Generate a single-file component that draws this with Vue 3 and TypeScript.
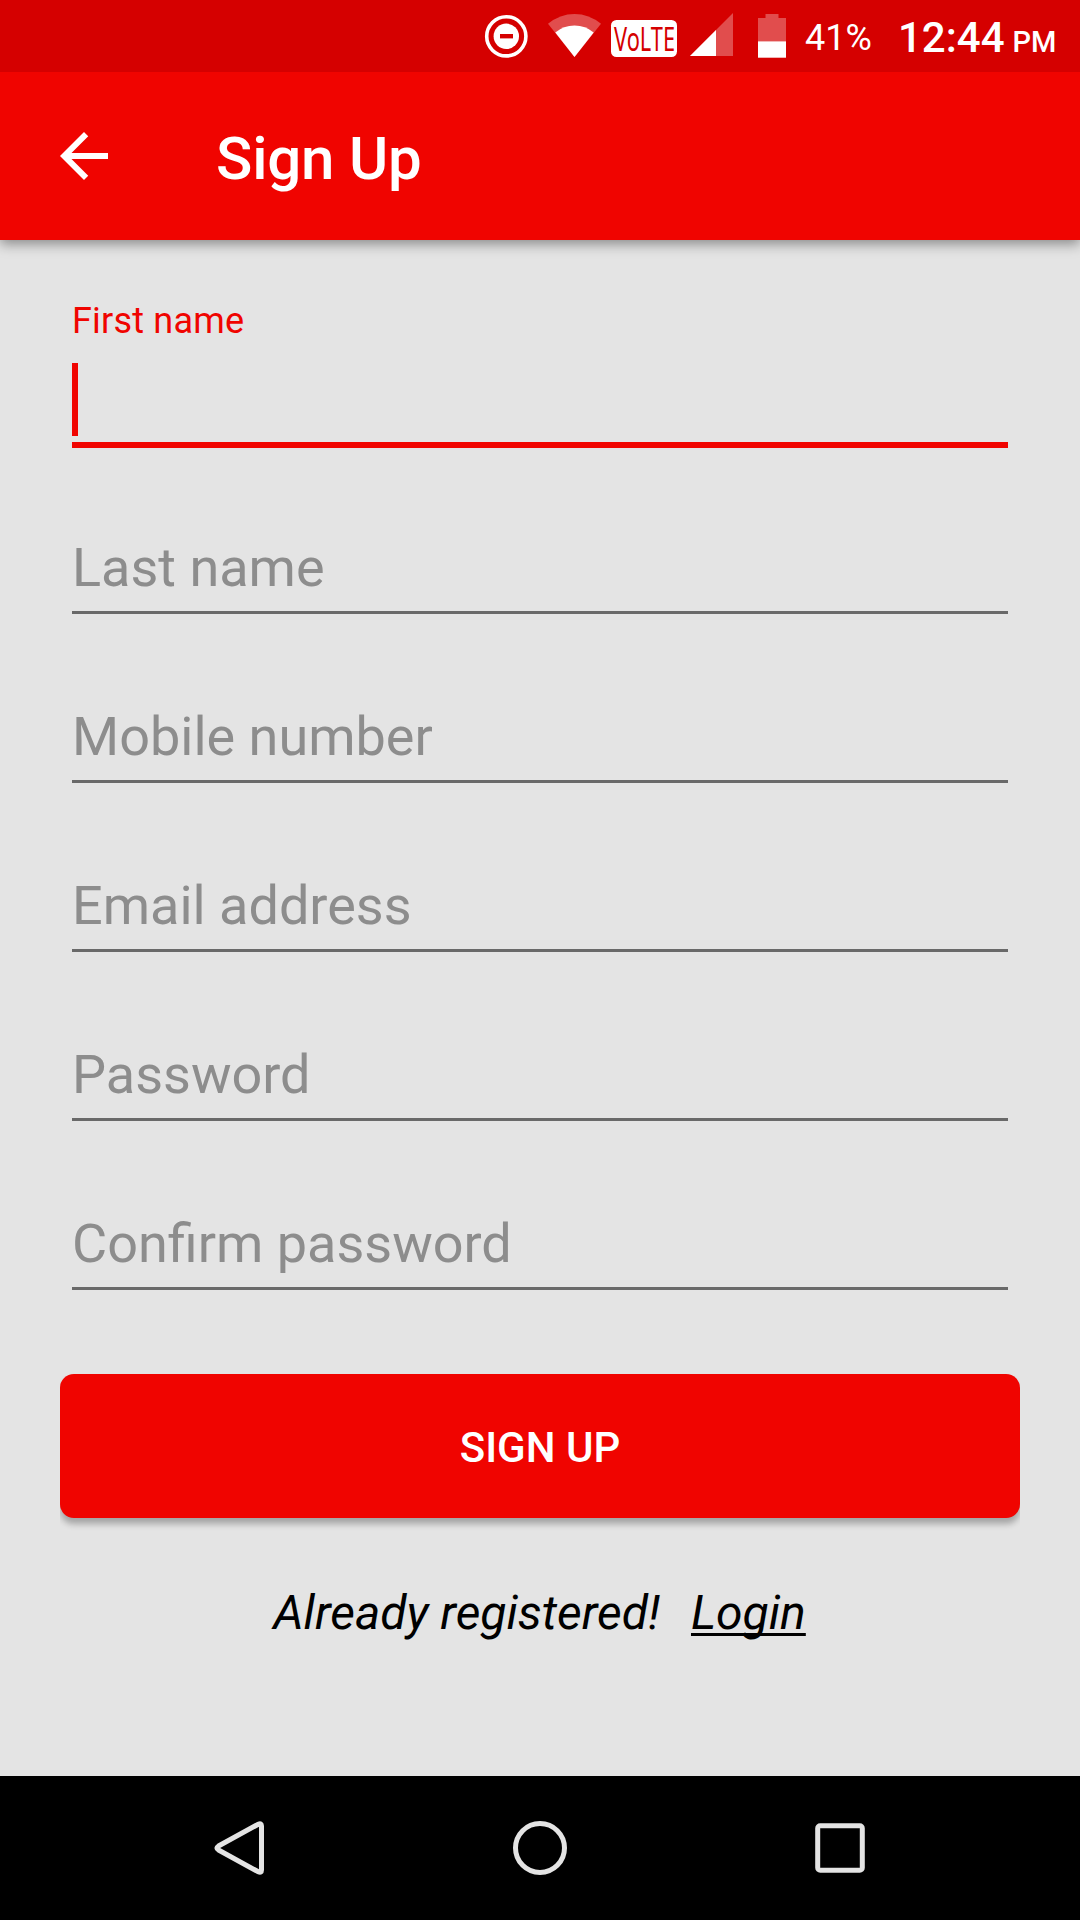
<script setup lang="ts">
interface Field {
  id: string
  label: string
}

const fields: Field[] = [
  { id: 'last-name', label: 'Last name' },
  { id: 'mobile', label: 'Mobile number' },
  { id: 'email', label: 'Email address' },
  { id: 'password', label: 'Password' },
  { id: 'confirm', label: 'Confirm password' },
]
</script>

<template>
  <div class="screen">
    <header class="status">
      <svg class="dnd" width="44" height="72" viewBox="0 0 44 72">
        <circle cx="22.3" cy="36.3" r="19.6" fill="none" stroke="#fff" stroke-width="3.6" />
        <circle cx="22.3" cy="36.3" r="12.7" fill="#fff" />
        <rect x="16" y="34" width="13" height="4.4" fill="#d50000" />
      </svg>
      <svg class="wifi" width="54" height="72" viewBox="0 0 54 72">
        <path d="M26.5 57 L0 23.8 Q12 14 26.5 14 T53 23.8 Z" fill="#fff" fill-opacity=".3" />
        <path d="M26.5 57 L7.3 32.5 Q15.5 25.5 26.5 25.5 T45.7 32.5 Z" fill="#fff" />
      </svg>
      <svg class="volte" width="66" height="72" viewBox="0 0 66 72">
        <rect x="0" y="20" width="66" height="37" rx="5.5" fill="#fff" />
        <text x="3" y="51.3" textLength="61" lengthAdjust="spacingAndGlyphs">VoLTE</text>
      </svg>
      <svg class="signal" width="44" height="72" viewBox="0 0 44 72">
        <path d="M0 56 L43 13 V56 Z" fill="#fff" fill-opacity=".3" />
        <path d="M0 56 L26 30 V56 Z" fill="#fff" />
      </svg>
      <svg class="battery" width="28" height="72" viewBox="0 0 28 72">
        <path d="M0 18 H7.5 V14 H20.5 V18 H28 V41.3 H0 Z" fill="#fff" fill-opacity=".3" />
        <rect y="41.3" width="28" height="16.4" fill="#fff" />
      </svg>
      <span class="percent">41%</span>
      <span class="clock">12:44<small>PM</small></span>
    </header>

    <div class="appbar">
      <svg width="72" height="72" viewBox="0 0 24 24">
        <path d="M20 11H7.83l5.59-5.59L12 4l-8 8 8 8 1.41-1.41L7.83 13H20v-2z" fill="#fff" />
      </svg>
      <h1>Sign Up</h1>
    </div>

    <main>
      <div class="active-field">
        <label>First name</label>
        <div class="entry"><i class="caret"></i></div>
      </div>
      <div v-for="field in fields" :key="field.id" class="field">
        <label>{{ field.label }}</label>
      </div>
      <div class="button-wrap">
        <button type="button">SIGN UP</button>
      </div>
      <p class="footer"><span>Already registered!</span><a>Login</a></p>
    </main>

    <nav>
      <svg width="60" height="60" viewBox="0 0 60 60">
        <path d="M48.3 6.2 Q51.500 4.600 51.500 8 V52 Q51.500 55.400 48.300 53.800 L8.500 32 Q5.300 30 8.500 28 Z" class="back" />
      </svg>
      <svg width="60" height="60" viewBox="0 0 60 60">
        <circle cx="30" cy="30" r="24.500" />
      </svg>
      <svg width="60" height="60" viewBox="0 0 60 60">
        <rect x="7.700" y="7.700" width="44.600" height="44.600" rx="2.500" />
      </svg>
    </nav>
  </div>
</template>

<style>
body {
  margin: 0;
}
</style>

<style scoped>
.screen {
  display: flex;
  flex-direction: column;
  width: 1080px;
  height: 1920px;
  overflow: hidden;
  background: #e4e4e4;
  font-family: Roboto, sans-serif;
}

.status {
  position: relative;
  z-index: 1;
  display: flex;
  flex: none;
  height: 72px;
  padding-left: 484px;
  background: #d50000;
  color: #fff;
  white-space: nowrap;
}

.status svg {
  flex: none;
  overflow: visible;
}

.wifi {
  margin-left: 20px;
}

.volte {
  margin-left: 9px;
}

.volte text {
  font: 33.5px "Noto Sans", sans-serif;
  fill: #d50000;
}

.signal {
  margin-left: 13px;
}

.battery {
  margin-left: 24px;
}

.percent {
  width: 66px;
  margin-left: 19px;
  font-size: 36px;
  line-height: 77px;
}

.clock {
  margin-left: 27px;
  font-size: 42px;
  font-weight: 500;
  line-height: 75px;
}

.clock small {
  margin-left: 8px;
  font-size: 29px;
}

.appbar {
  position: relative;
  display: flex;
  flex: none;
  align-items: center;
  height: 168px;
  padding-left: 48px;
  background: #f00400;
  box-shadow: 0 4px 12px rgba(0, 0, 0, 0.4);
  color: #fff;
}

h1 {
  margin: 6px 0 0 96px;
  font-size: 60px;
  font-weight: 500;
  line-height: 70px;
  letter-spacing: -0.2px;
}

main {
  flex: 1;
  padding: 60px 60px 0;
}

.active-field {
  margin: 0 12px 88px;
}

.active-field label {
  display: block;
  color: #f00400;
  font-size: 36px;
  line-height: 42px;
  letter-spacing: 0.2px;
}

.entry {
  height: 79px;
  margin-top: 21px;
  border-bottom: 6px solid #f00400;
}

.caret {
  display: block;
  width: 6px;
  height: 73px;
  background: #f00400;
}

.field {
  box-sizing: border-box;
  height: 78px;
  margin: 0 12px 91px;
  border-bottom: 3px solid #696969;
}

.field label {
  display: block;
  color: #8d8d8d;
  font-size: 54px;
  line-height: 63px;
}

.button-wrap {
  height: 156px;
  margin-top: -7px;
  clip-path: inset(-12px 0 -6px);
}

button {
  display: block;
  width: 960px;
  height: 144px;
  padding: 3px 0 0;
  border: 0;
  border-radius: 14px;
  background: #f00400;
  box-shadow: 0 6px 6px rgba(0, 0, 0, 0.28);
  color: #fff;
  font: 500 42px/50px Roboto, sans-serif;
}

.footer {
  display: flex;
  justify-content: center;
  gap: 31px;
  margin: 55px 1px 0 0;
  color: #000;
  font-size: 48px;
  font-style: italic;
  line-height: 56px;
}

.footer a {
  text-decoration: underline;
  text-decoration-skip-ink: none;
  text-decoration-thickness: 3px;
  text-underline-offset: 4px;
}

nav {
  display: flex;
  flex: none;
  align-items: center;
  gap: 240px;
  height: 144px;
  padding-left: 210px;
  background: #000;
}

nav svg {
  fill: none;
  stroke: #e4e4e4;
  stroke-width: 5;
}

nav .back {
  stroke-linejoin: round;
}
</style>
